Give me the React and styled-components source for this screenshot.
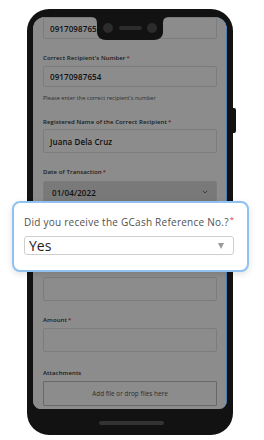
import styled, { createGlobalStyle } from "styled-components";

const GlobalStyle = createGlobalStyle`
    * { box-sizing: border-box; }
    body {
        margin: 0;
        background: #ffffff;
        font-family: "Open Sans", "Noto Sans", sans-serif;
    }
`;

const Stage = styled.div`
    position: relative;
    width: 264px;
    height: 440px;
    overflow: hidden;
    padding: 9px 0 0 27px;
`;

const Phone = styled.div`
    position: relative;
    width: 206px;
    height: 426px;
    padding: 8px 6px 26px 6px;
    background: #121212;
    border-radius: 22px;
`;

const SideButton = styled.div`
    position: absolute;
    right: -3px;
    top: 99px;
    width: 3px;
    height: 25px;
    background: #121212;
    border-radius: 0 2px 2px 0;
`;

const Screen = styled.div`
    position: relative;
    height: 100%;
    background: #ffffff;
    border-radius: 12px 12px 8px 8px;
    overflow: hidden;
    border-right: 1px solid #4a7fb8;
`;

const Form = styled.div`
    padding: 0 9px 0 10px;
`;

const Label = styled.div`
    margin-top: ${(p) => p.$mt}px;
    height: 8px;
    font-size: 6px;
    line-height: 8px;
    font-weight: 600;
    color: #333;
    letter-spacing: 0.1px;
`;

const Req = styled.span`
    color: #d42a2a;
    margin-left: 1px;
`;

const Input = styled.div`
    margin-top: ${(p) => p.$mt || 0}px;
    height: ${(p) => p.$h}px;
    display: flex;
    align-items: center;
    justify-content: space-between;
    padding: 0 8px 0 6px;
    border: 1px solid #e2e2e2;
    border-radius: 2px;
    background: ${(p) => (p.$shade ? "#dcdcdc" : "#ffffff")};
    font-size: 8px;
    font-weight: 600;
    color: #222;
    letter-spacing: 0.1px;
`;

const Helper = styled.div`
    margin-top: 7px;
    font-size: 5.6px;
    line-height: 8px;
    color: #555;
`;

const Dropzone = styled.div`
    margin-top: 4px;
    height: 25px;
    border: 1px solid #bdbdbd;
    border-radius: 1px;
    display: flex;
    align-items: center;
    justify-content: center;
    font-size: 6.4px;
    color: #555;
`;

const Dim = styled.div`
    position: absolute;
    inset: 0;
    background: rgba(0, 0, 0, 0.45);
`;

const Notch = styled.svg`
    position: absolute;
    left: 64px;
    top: 8px;
`;

const HomeBar = styled.div`
    position: absolute;
    left: 72px;
    bottom: 10px;
    width: 65px;
    height: 4px;
    border-radius: 2px;
    background: #333;
`;

const Popup = styled.div`
    position: absolute;
    left: 12px;
    top: 201px;
    width: 237px;
    height: 71px;
    padding: 12px 13px 0 10px;
    background: #fff;
    border: 2px solid #8fc2f0;
    border-radius: 8px;
    box-shadow: 0 2px 6px rgba(0, 0, 0, 0.12);
`;

const Question = styled.div`
    font-size: 10px;
    line-height: 14px;
    color: #505050;
    letter-spacing: 0.25px;
    white-space: nowrap;
`;

const Star = styled.sup`
    color: #e03a3a;
    font-size: 8px;
    line-height: 0;
    margin-left: 1px;
`;

const Select = styled.div`
    margin-top: 7px;
    height: 19px;
    display: flex;
    align-items: center;
    justify-content: space-between;
    padding: 0 9px 0 4px;
    border: 1px solid #cfcfcf;
    border-radius: 3px;
    font-size: 14px;
    color: #222;
`;

const Caret = styled.span`
    width: 0;
    height: 0;
    border-left: 3.5px solid transparent;
    border-right: 3.5px solid transparent;
    border-top: 6px solid #9a9a9a;
`;

const Chevron = () => (
    <svg width="6" height="4" viewBox="0 0 6 4">
        <path d="M0.8 0.8 L3 3 L5.2 0.8" fill="none" stroke="#555" strokeWidth="0.8" />
    </svg>
);

export default function App() {
    return (
        <>
            <GlobalStyle />
            <Stage>
                <Phone>
                    <SideButton />
                    <Screen>
                        <Form>
                            <Input $h={22}>09170987653</Input>

                            <Label $mt={15}>Correct Recipient's Number<Req>*</Req></Label>
                            <Input $mt={4} $h={21}>09170987654</Input>
                            <Helper>Please enter the correct recipient's number</Helper>

                            <Label $mt={16}>Registered Name of the Correct Recipient<Req>*</Req></Label>
                            <Input $mt={3} $h={24}>Juana Dela Cruz</Input>

                            <Label $mt={15}>Date of Transaction<Req>*</Req></Label>
                            <Input $mt={5} $h={22} $shade>
                                <span style={{ paddingLeft: 2 }}>01/04/2022</span>
                                <Chevron />
                            </Input>

                            {/* fields hidden behind the popup */}
                            <Label $mt={14} />
                            <Input $mt={5} $h={22} />
                            <Label $mt={12} />
                            <Input $mt={5} $h={24} />

                            <Label $mt={15}>Amount<Req>*</Req></Label>
                            <Input $mt={4} $h={24} />

                            <Label $mt={17}>Attachments</Label>
                            <Dropzone>Add file or drop files here</Dropzone>
                        </Form>
                        <Dim />
                    </Screen>
                    <Notch width="78" height="25" viewBox="0 0 78 25">
                        <path
                            d="M0 0 H78 C72 0 72 4 72 8 V15 C72 20 68 23 63 23 H15 C10 23 6 20 6 15 V8 C6 4 6 0 0 0 Z"
                            fill="#121212"
                        />
                        <circle cx="17" cy="11" r="5" fill="#2c2c2c" />
                        <circle cx="61" cy="11" r="5" fill="#2c2c2c" />
                        <rect x="28" y="9" width="23" height="4" rx="2" fill="#2c2c2c" />
                    </Notch>
                    <HomeBar />
                </Phone>
                <Popup>
                    <Question>
                        Did you receive the GCash Reference No.?<Star>*</Star>
                    </Question>
                    <Select>
                        Yes
                        <Caret />
                    </Select>
                </Popup>
            </Stage>
        </>
    );
}
